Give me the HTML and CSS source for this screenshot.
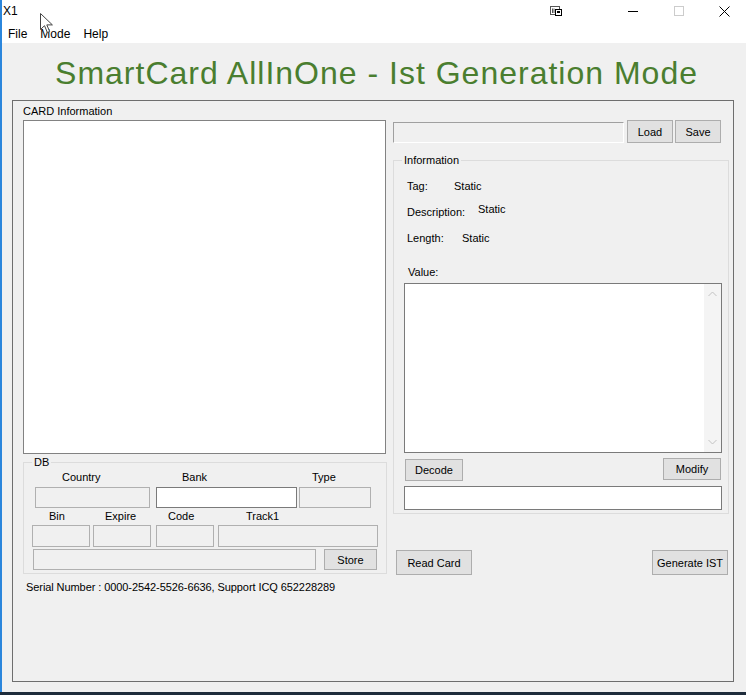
FILE: index.html
```html
<!DOCTYPE html>
<html lang="en">
<head>
    <meta charset="UTF-8">
    <title>X1</title>
    <link rel="stylesheet" href="styles.css">
</head>
<body>
    <div class="window">
        <div class="titlebar">
            <span class="caption">X1</span>
            <div class="caption-buttons">
                <span class="cap-btn snap">
                    <svg width="12" height="10" viewBox="0 0 12 10">
                        <rect x="0.5" y="0.5" width="9" height="8" fill="none" stroke="#555"/>
                        <path d="M2.5 2.5v4.5M4 2.5v4.5" stroke="#555"/>
                        <rect x="5.5" y="3.5" width="6" height="6" fill="#fff" stroke="#000"/>
                        <rect x="7" y="5" width="3" height="2" fill="#000"/>
                    </svg>
                </span>
                <span class="cap-btn">
                    <svg width="10" height="10" viewBox="0 0 10 10"><path d="M0 5.5h10" stroke="#000"/></svg>
                </span>
                <span class="cap-btn">
                    <svg width="10" height="10" viewBox="0 0 10 10"><rect x="0.5" y="0.5" width="9" height="9" fill="none" stroke="#cccccc"/></svg>
                </span>
                <span class="cap-btn close">
                    <svg width="11" height="11" viewBox="0 0 11 11"><path d="M0.5 0.5l10 10M10.5 0.5l-10 10" stroke="#000"/></svg>
                </span>
            </div>
        </div>

        <div class="menubar">
            <span class="menu-item">File</span>
            <span class="menu-item">Mode</span>
            <span class="menu-item">Help</span>
        </div>

        <div class="client">
            <h1 class="app-title">SmartCard AllInOne - Ist Generation Mode</h1>

            <div class="main-panel">
                <div class="left-col">
                    <div class="caption-label">CARD Information</div>
                    <div class="card-list"></div>

                    <fieldset class="group db-group">
                        <legend>DB</legend>
                        <div class="group-body db-body">
                            <div class="db-labels">
                                <span class="l-country">Country</span>
                                <span class="l-bank">Bank</span>
                                <span>Type</span>
                            </div>
                            <div class="db-row row-a">
                                <span class="tb f-country"></span>
                                <span class="tb tb-white f-bank"></span>
                                <span class="tb f-type"></span>
                            </div>
                            <div class="db-labels">
                                <span class="l-bin">Bin</span>
                                <span class="l-expire">Expire</span>
                                <span class="l-code">Code</span>
                                <span>Track1</span>
                            </div>
                            <div class="db-row row-b">
                                <span class="tb f-bin"></span>
                                <span class="tb f-expire"></span>
                                <span class="tb f-code"></span>
                                <span class="tb f-track"></span>
                            </div>
                            <div class="db-row row-c">
                                <span class="tb f-note"></span>
                                <button class="btn store-btn">Store</button>
                            </div>
                        </div>
                    </fieldset>

                    <div class="serial">Serial Number : 0000-2542-5526-6636, Support ICQ 652228289</div>
                </div>

                <div class="right-col">
                    <div class="file-row">
                        <span class="tb tb-sunken file-path"></span>
                        <button class="btn file-btn load-btn">Load</button>
                        <button class="btn file-btn save-btn">Save</button>
                    </div>

                    <fieldset class="group info-group">
                        <legend>Information</legend>
                        <div class="group-body info-body">
                            <div class="info-row tag-row">
                                <span class="info-key k-tag">Tag:</span>
                                <span>Static</span>
                            </div>
                            <div class="info-row desc-row">
                                <span class="info-key k-desc">Description:</span>
                                <span>Static</span>
                            </div>
                            <div class="info-row len-row">
                                <span class="info-key k-len">Length:</span>
                                <span>Static</span>
                            </div>
                            <div class="value-label">Value:</div>
                            <div class="value-box">
                                <div class="value-text"></div>
                                <div class="vscroll">
                                    <svg width="9" height="6" viewBox="0 0 9 6"><path d="M0.5 5L4.5 1l4 4" fill="none" stroke="#c2c2c2"/></svg>
                                    <svg width="9" height="6" viewBox="0 0 9 6"><path d="M0.5 1l4 4 4-4" fill="none" stroke="#c2c2c2"/></svg>
                                </div>
                            </div>
                            <div class="decode-row">
                                <button class="btn decode-btn">Decode</button>
                                <button class="btn modify-btn">Modify</button>
                            </div>
                            <span class="tb tb-white result-box"></span>
                        </div>
                    </fieldset>

                    <div class="action-row">
                        <button class="btn action-btn read-btn">Read Card</button>
                        <button class="btn action-btn gen-btn">Generate IST</button>
                    </div>
                </div>
            </div>
        </div>

        <!-- mouse pointer left over the menu bar -->
        <svg class="pointer" width="13" height="21" viewBox="0 0 13 21">
            <path d="M0.5 0.5v16l4-3.8 2.9 6.8 2.3-1-2.9-6.6h5.6z" fill="#fff" stroke="#444"/>
        </svg>
    </div>
    <div class="taskbar"></div>
</body>
</html>
```

FILE: styles.css
```css
body {
    margin: 0;
    width: 746px;
    height: 695px;
    overflow: hidden;
    background-color: #f0f0f0;
    font-family: 'Liberation Sans', Arial, sans-serif;
    font-size: 11px;
    color: #000;
}
.window {
    position: relative;
    height: 692px;
    box-sizing: border-box;
    border-left: 2px solid #2b86dc;
    background-color: #f0f0f0;
}
.taskbar {
    height: 3px;
    background-color: #1e2c3b;
}

/* title bar */
.titlebar {
    display: flex;
    height: 22px;
    background-color: #fff;
    font-size: 12px;
}
.caption {
    padding-left: 1px;
    line-height: 23px;
}
.caption-buttons {
    display: flex;
    margin-left: auto;
}
.cap-btn {
    display: flex;
    align-items: center;
    justify-content: center;
    width: 46px;
    height: 22px;
}
.cap-btn.snap {
    width: 22px;
    margin-right: 43px;
}
.cap-btn.close {
    width: 44px;
}
.menubar {
    display: flex;
    height: 21px;
    background-color: #fff;
    font-size: 12px;
}
.menu-item {
    padding: 4px 6px 0;
    margin-right: 1px;
    line-height: 17px;
}
.pointer {
    position: absolute;
    left: 38px;
    top: 13px;
}

/* client area */
.app-title {
    margin: 0;
    padding-top: 4px;
    padding-left: 5px;
    height: 53px;
    line-height: 53px;
    text-align: center;
    font-size: 32px;
    font-weight: normal;
    letter-spacing: 1px;
    color: #4a7e2f;
}
.main-panel {
    display: grid;
    grid-template-columns: 364px 336px;
    column-gap: 6px;
    align-items: start;
    width: 722px;
    height: 582px;
    margin-left: 10px;
    padding-left: 10px;
    box-sizing: border-box;
    border: 1px solid #6e6e6e;
}
.caption-label {
    padding-top: 3px;
    line-height: 14px;
}
.card-list {
    width: 363px;
    height: 334px;
    margin-top: 2px;
    box-sizing: border-box;
    border: 1px solid #828282;
    background-color: #fff;
}

/* group boxes */
.group {
    margin: 0;
    padding: 0;
    min-width: 0;
    border: 1px solid #dcdcdc;
}
.group legend {
    margin-left: 8px;
    padding: 0 2px;
    line-height: 14px;
}
.db-group {
    width: 364px;
    margin-top: 1px;
    box-sizing: border-box;
}
.db-body {
    padding-bottom: 3px;
}
.db-labels {
    display: flex;
    height: 14px;
    line-height: 14px;
    margin-top: 1px;
}
.db-labels .l-country { margin-left: 38px; width: 120px; }
.db-labels .l-bank { width: 130px; }
.db-labels .l-bin { margin-left: 25px; width: 56px; }
.db-labels .l-expire { width: 63px; }
.db-labels .l-code { width: 78px; }
.db-row {
    display: flex;
}
.tb {
    display: block;
    box-sizing: border-box;
    border: 1px solid #b0b0b0;
    background-color: #f0f0f0;
}
.tb-white {
    border-color: #7a7a7a;
    background-color: #fff;
}
.tb-sunken {
    border-color: #a0a0a0 #fff #fff #a0a0a0;
}
.row-a { margin-top: 3px; height: 21px; }
.row-a .f-country { margin-left: 11px; width: 115px; }
.row-a .f-bank { margin-left: 6px; width: 141px; }
.row-a .f-type { margin-left: 2px; width: 72px; }
.row-b { margin-top: 1px; height: 22px; }
.db-labels + .row-b { margin-top: 2px; }
.row-b .f-bin { margin-left: 8px; width: 58px; }
.row-b .f-expire { margin-left: 3px; width: 58px; }
.row-b .f-code { margin-left: 5px; width: 58px; }
.row-b .f-track { margin-left: 4px; width: 160px; }
.row-c { margin-top: 2px; height: 21px; }
.row-c .f-note { margin-left: 9px; width: 283px; }
.db-row .tb { height: 100%; }

.btn {
    box-sizing: border-box;
    margin: 0;
    padding: 0;
    border: 1px solid #adadad;
    background-color: #e1e1e1;
    font-family: inherit;
    font-size: 11px;
    color: #000;
}
.store-btn {
    width: 53px;
    height: 21px;
    margin-left: 8px;
}
.serial {
    margin: 6px 0 0 3px;
    line-height: 14px;
    letter-spacing: -0.08px;
}

/* right column */
.file-row {
    display: flex;
    align-items: flex-start;
    margin-top: 19px;
}
.file-path {
    width: 231px;
    height: 21px;
    margin-top: 2px;
}
.file-btn {
    width: 46px;
    height: 23px;
}
.load-btn { margin-left: 3px; }
.save-btn { margin-left: 2px; }

.info-group {
    width: 336px;
    margin-top: 10px;
    box-sizing: border-box;
}
.info-body {
    padding: 0 6px 3px 10px;
}
.info-row {
    display: flex;
    align-items: flex-start;
    line-height: 14px;
}
.info-key { margin-left: 3px; }
.k-tag { width: 47px; }
.k-desc { width: 71px; padding-top: 3px; }
.k-len { width: 55px; }
.tag-row { margin-top: 12px; }
.desc-row { margin-top: 9px; }
.len-row { margin-top: 12px; }
.value-label {
    margin: 20px 0 0 4px;
    line-height: 14px;
}
.value-box {
    display: flex;
    height: 170px;
    margin-top: 4px;
    box-sizing: border-box;
    border: 1px solid #7a7a7a;
    background-color: #fff;
}
.value-text {
    flex: 1;
}
.vscroll {
    display: flex;
    flex-direction: column;
    justify-content: space-between;
    align-items: center;
    width: 17px;
    padding: 7px 0 7px;
    box-sizing: border-box;
    background-color: #f4f4f4;
}
.decode-row {
    display: flex;
    align-items: flex-start;
    height: 23px;
    margin-top: 5px;
}
.decode-btn {
    width: 58px;
    height: 22px;
    margin: 1px 0 0 1px;
}
.modify-btn {
    width: 58px;
    height: 22px;
    margin: 0 1px 0 auto;
}
.result-box {
    height: 24px;
    margin-top: 5px;
}
.action-row {
    display: flex;
    justify-content: space-between;
    margin-top: 36px;
}
.action-btn {
    width: 76px;
    height: 25px;
}
.read-btn { margin-left: 3px; }
.gen-btn { margin-right: 1px; }
```
